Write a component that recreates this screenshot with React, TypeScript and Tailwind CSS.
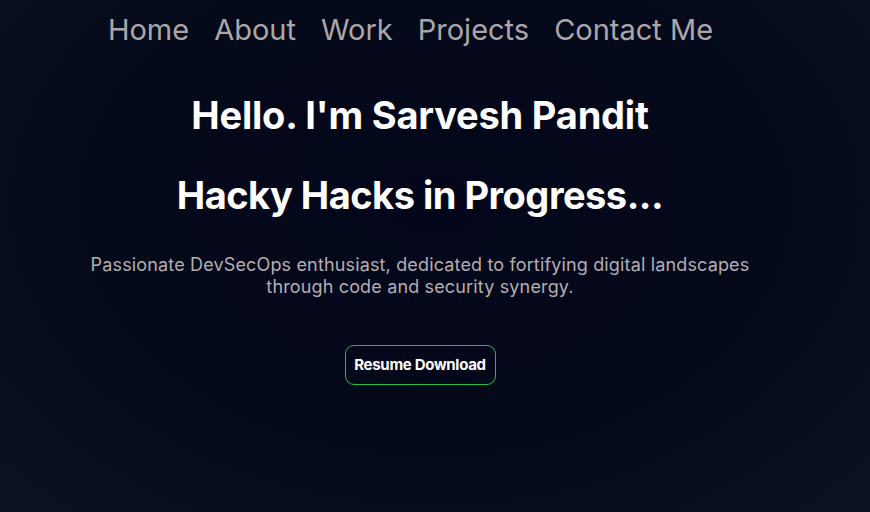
import React from "react";

export default function App() {
  return (
    <div
      className="relative h-[512px] w-full overflow-hidden bg-[#050816]"
      style={{ fontFamily: "Inter, 'Noto Sans', sans-serif" }}
    >
      <div className="absolute inset-0 bg-[radial-gradient(ellipse_at_50%_40%,#03061a_0%,#050a1a_55%,#0b1220_100%)]" />
      <div className="relative flex flex-col">
        <nav className="flex justify-center gap-[25px] pr-[49px] pt-[12px] text-[29px] leading-[36px] text-[#aca6a9]">
          <a>Home</a>
          <a>About</a>
          <a>Work</a>
          <a>Projects</a>
          <a>Contact Me</a>
        </nav>
        <div className="flex flex-col items-center pr-[30px] text-center">
          <h1 className="mt-[43px] text-[38px] font-bold leading-[48px] tracking-[-0.2px] text-white">
            Hello. I'm Sarvesh Pandit
          </h1>
          <h2 className="mt-[32px] text-[38px] font-bold leading-[48px] tracking-[-0.5px] text-white">
            Hacky Hacks in Progress...
          </h2>
          <p className="mt-[35px] w-[700px] text-[18px] leading-[22px] tracking-[0.15px] text-[#b4aeb1]">
            Passionate DevSecOps enthusiast, dedicated to fortifying digital landscapes through code and security synergy.
          </p>
          <button className="mt-[47px] h-[40px] w-[151px] rounded-[9px] border border-[#1fbf4f] text-[15px] font-bold tracking-[-0.3px] text-white">
            Resume Download
          </button>
        </div>
      </div>
    </div>
  );
}
